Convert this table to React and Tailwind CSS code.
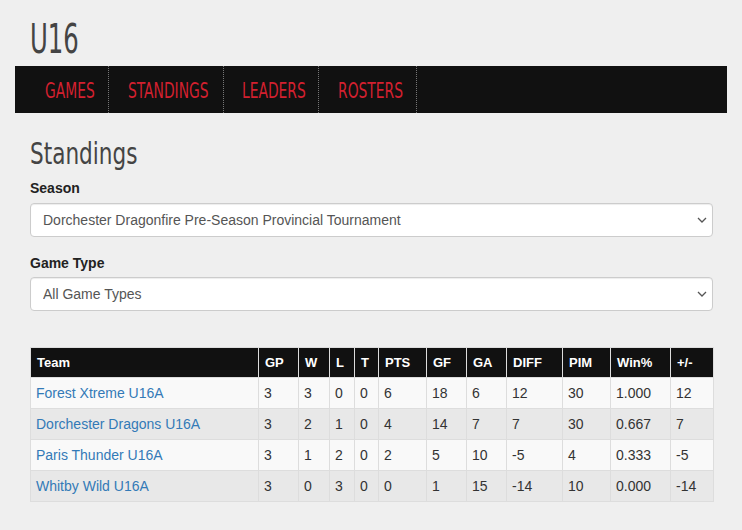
import { useState } from 'react'

const heading = { fontFamily: '"Liberation Sans Narrow", "DejaVu Sans Condensed", sans-serif' }
const body = { fontFamily: '"Liberation Sans", Arial, sans-serif' }

const tabs = [
  { label: 'GAMES', w: 'w-[94px] pl-[30px]' },
  { label: 'STANDINGS', w: 'w-[115px] pl-[19px]' },
  { label: 'LEADERS', w: 'w-[95px] pl-[18px]' },
  { label: 'ROSTERS', w: 'w-[98px] pl-[19px]' },
]

const cols = [
  ['Team', 228],
  ['GP', 40],
  ['W', 31],
  ['L', 25],
  ['T', 24],
  ['PTS', 48],
  ['GF', 40],
  ['GA', 40],
  ['DIFF', 56],
  ['PIM', 48],
  ['Win%', 60],
  ['+/-', 43],
]

const rows = [
  ['Forest Xtreme U16A', 3, 3, 0, 0, 6, 18, 6, 12, 30, '1.000', 12],
  ['Dorchester Dragons U16A', 3, 2, 1, 0, 4, 14, 7, 7, 30, '0.667', 7],
  ['Paris Thunder U16A', 3, 1, 2, 0, 2, 5, 10, -5, 4, '0.333', -5],
  ['Whitby Wild U16A', 3, 0, 3, 0, 0, 1, 15, -14, 10, '0.000', -14],
]

function Select({ value, onChange, children }) {
  return (
    <div className="relative w-[683px]">
      <select
        value={value}
        onChange={onChange}
        className="block h-[34px] w-full appearance-none rounded-[4px] border border-[#ccc] bg-white px-[12px] text-[14px] text-[#555] shadow-[inset_0_1px_1px_rgba(0,0,0,0.075)]"
      >
        {children}
      </select>
      {/* chevron */}
      <svg
        className="pointer-events-none absolute right-[6px] top-[14px]"
        width="10"
        height="6"
        viewBox="0 0 10 6"
        fill="none"
      >
        <path d="M1 1l4 4 4-4" stroke="#555" strokeWidth="1.3" />
      </svg>
    </div>
  )
}

export default function App() {
  const [season, setSeason] = useState('dragonfire')
  const [gameType, setGameType] = useState('all')

  return (
    <div className="min-h-[530px] bg-[#efefef] px-[15px] pt-[16px] pb-[28px]" style={body}>
      <h1
        className="h-[46px] pl-[15px] text-[41px] leading-[46px] text-[#444]"
        style={heading}
      >
        <span className="inline-block origin-left scale-x-[0.66]">U16</span>
      </h1>

      <nav className="mt-[4px] flex h-[47px] w-[712px] bg-[#111]">
        {tabs.map((t) => (
          <a
            key={t.label}
            href="#"
            className={`flex h-full items-center border-r border-dotted border-[#777] pt-[2px] text-[22px] text-[#d3202f] ${t.w}`}
            style={heading}
          >
            <span className="inline-block origin-left scale-x-[0.7] whitespace-nowrap">{t.label}</span>
          </a>
        ))}
      </nav>

      <div className="px-[15px]">
        <h2 className="mt-[23px] h-[36px] text-[30px] leading-[36px] text-[#444]" style={heading}>
          <span className="inline-block origin-left scale-x-[0.8]">Standings</span>
        </h2>

        <label className="mt-[6px] mb-[5px] block text-[14px] font-bold leading-[20px] text-[#222]">Season</label>
        <Select value={season} onChange={(e) => setSeason(e.target.value)}>
          <option value="dragonfire">Dorchester Dragonfire Pre-Season Provincial Tournament</option>
        </Select>

        <label className="mt-[16px] mb-[4px] block text-[14px] font-bold leading-[20px] text-[#222]">Game Type</label>
        <Select value={gameType} onChange={(e) => setGameType(e.target.value)}>
          <option value="all">All Game Types</option>
        </Select>

        <table className="mt-[36px] w-[683px] table-fixed border-collapse border border-[#ddd] text-[14px]">
          <colgroup>
            {cols.map(([c, w]) => (
              <col key={c} style={{ width: w }} />
            ))}
          </colgroup>
          <thead>
            <tr className="h-[30px] bg-[#111]">
              {cols.map(([c]) => (
                <th key={c} className="border border-[#ddd] px-[6px] text-left text-[13px] font-bold text-white">
                  {c}
                </th>
              ))}
            </tr>
          </thead>
          <tbody>
            {rows.map((r, i) => (
              <tr key={r[0]} className={`h-[31px] ${i % 2 === 0 ? 'bg-[#f9f9f9]' : 'bg-[#e8e8e8]'}`}>
                {r.map((v, j) => (
                  <td key={j} className="border border-[#ddd] px-[5px] text-[#333]">
                    {j === 0 ? (
                      <a href="#" className="text-[#337ab7]">
                        {v}
                      </a>
                    ) : (
                      v
                    )}
                  </td>
                ))}
              </tr>
            ))}
          </tbody>
        </table>
      </div>
    </div>
  )
}
